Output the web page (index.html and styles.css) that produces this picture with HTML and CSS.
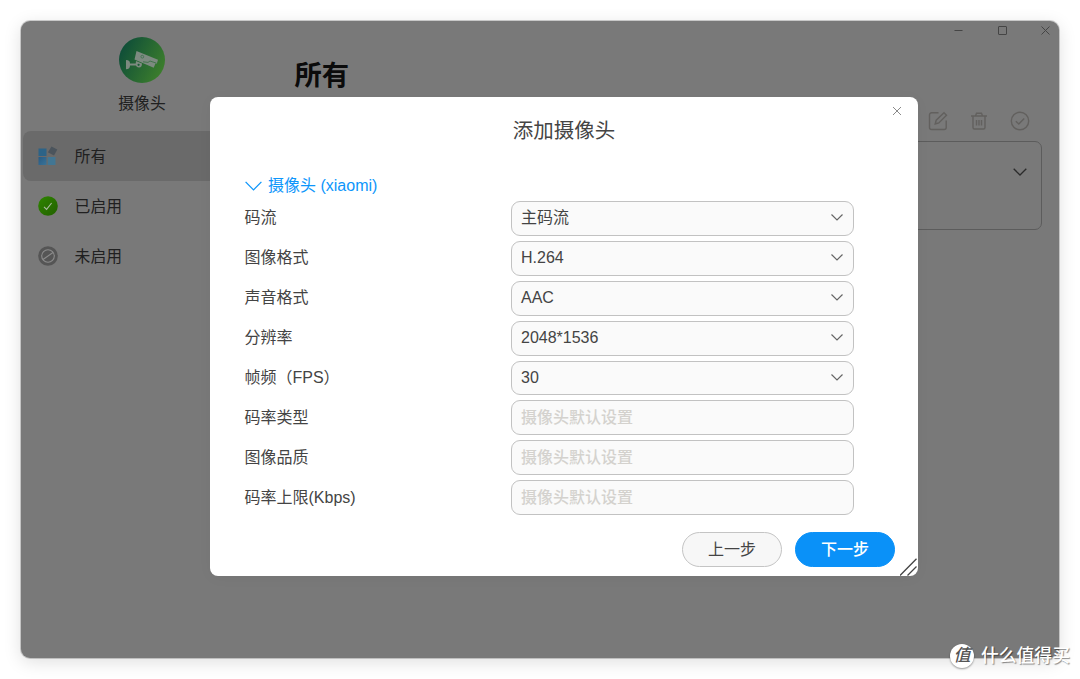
FILE: index.html
```html
<!DOCTYPE html>
<html lang="zh-CN">
<head>
  <meta charset="UTF-8" />
  <meta name="viewport" content="width=device-width, initial-scale=1.0"/>
  <title>添加摄像头</title>
  <link rel="stylesheet" href="styles.css">
</head>
<body>
  <div class="window">
    <aside class="sidebar">
      <div class="app">
        <svg class="app-logo" viewBox="0 0 46 46">
          <defs>
            <linearGradient id="logo-bg" x1="0" y1="0.2" x2="1" y2="0.7">
              <stop offset="0" stop-color="#0c4b39"/>
              <stop offset="1" stop-color="#3d7f2c"/>
            </linearGradient>
          </defs>
          <circle cx="23" cy="23" r="23" fill="url(#logo-bg)"/>
          <g fill="#7d8a80">
            <path d="M17.500 14l21.500 8.800-1.200 4-1.300-.3-1.800 4.300L15.500 22.500z"/>
            <path d="M7 23c3 0 4 1.500 4 3.500h6.500v2H11c0 2-1 3.800-4 3.800z"/>
            <path d="M17 24l6 2.500c0 2.500-1 4-3 4s-3.300-1.500-3.300-3.200z"/>
          </g>
          <circle cx="19.600" cy="27.800" r="1.100" fill="#1a5c36"/>
          <circle cx="23.300" cy="19.700" r="1.400" fill="none" stroke="#2a6840" stroke-width=".6"/>
          <path d="M24 24.800l5 .6 2-1.400 6.500 2.200" fill="none" stroke="#2b6c38" stroke-width=".7"/>
        </svg>
        <p class="app-name">摄像头</p>
      </div>
      <nav class="nav">
        <div class="nav-item active">
          <svg class="nav-icon" viewBox="0 0 20 20">
            <defs>
              <linearGradient id="tile" x1="0" y1="0" x2="1" y2="1">
                <stop offset="0" stop-color="#275b85"/>
                <stop offset="1" stop-color="#3a7397"/>
              </linearGradient>
            </defs>
            <path fill="#2c6387" d="M.5 2.500h8v7.500h-8z"/>
            <path fill="url(#tile)" d="M.5 11h8v8h-8z"/>
            <path fill="#427693" d="M9.700 11h7.800v8H9.700z"/>
            <path fill="#4b545c" d="M13.500.4l5.800 3.200-3.300 6L9.900 6.300z"/>
          </svg>
          <span>所有</span>
        </div>
        <div class="nav-item">
          <svg class="nav-icon" viewBox="0 0 20 20">
            <defs>
              <linearGradient id="ok" x1="0" y1="0" x2="1" y2="1">
                <stop offset="0" stop-color="#2f8500"/>
                <stop offset="1" stop-color="#226000"/>
              </linearGradient>
            </defs>
            <circle cx="10" cy="10" r="9.800" fill="url(#ok)"/>
            <path d="M6 10.800l2.600 2.600 5-6.400" fill="none" stroke="#a9b9a0" stroke-width="1.100"/>
          </svg>
          <span>已启用</span>
        </div>
        <div class="nav-item">
          <svg class="nav-icon" viewBox="0 0 20 20">
            <circle cx="10" cy="10" r="9.800" fill="#555"/>
            <g fill="none" stroke="#8c8c8c" stroke-width="1.100">
              <circle cx="10" cy="10" r="6.300"/>
              <path d="M5 13.500l10-7"/>
            </g>
          </svg>
          <span>未启用</span>
        </div>
      </nav>
    </aside>

    <main class="main">
      <div class="titlebar">
        <svg class="control" viewBox="0 0 11 11"><path d="M1.500 5.500h8"/></svg>
        <svg class="control" viewBox="0 0 11 11"><rect x="1.500" y="1.500" width="8" height="8" rx=".5"/></svg>
        <svg class="control" viewBox="0 0 11 11"><path d="M1.500 1.500l8 8M9.500 1.500l-8 8"/></svg>
      </div>
      <h1 class="page-title">所有</h1>
      <div class="toolbar">
        <svg class="tool" viewBox="0 0 20 20">
          <path d="M10.500 1.800H3.500a2 2 0 0 0-2 2v12.700a2 2 0 0 0 2 2h12.700a2 2 0 0 0 2-2V9.500"/>
          <path d="M7.200 13l1-3.800L16 1.700l2.500 2.500-7.700 7.800z"/>
        </svg>
        <svg class="tool" viewBox="0 0 20 20">
          <path d="M2 5h16M6.500 5l1-2.800h5l1 2.800M4 5v11.500a1.500 1.500 0 0 0 1.500 1.500h9a1.500 1.500 0 0 0 1.500-1.500V5M7.500 9v5.500M10 9v5.500M12.500 9v5.500"/>
        </svg>
        <svg class="tool" viewBox="0 0 20 20">
          <circle cx="10" cy="10" r="8.700"/>
          <path d="M5.800 10.200l3 2.900 5.400-5.600"/>
        </svg>
      </div>
      <div class="card">
        <svg class="card-arrow" viewBox="0 0 14 8"><path d="M.7.8L7 7 13.300.8"/></svg>
      </div>
    </main>

    <div class="dialog">
      <svg class="dialog-close" viewBox="0 0 10 10"><path d="M1 1l8 8M9 1l-8 8"/></svg>
      <h2 class="dialog-title">添加摄像头</h2>
      <div class="section">
        <svg class="section-arrow" viewBox="0 0 17 10"><path d="M.6.9l7.900 8L16.400.9"/></svg>
        <span>摄像头 (xiaomi)</span>
      </div>
      <div class="form">
        <div class="row">
          <span class="label">码流</span>
          <div class="field"><span>主码流</span><svg class="arrow" viewBox="0 0 12 7"><path d="M.5.5L6 6 11.500.5"/></svg></div>
        </div>
        <div class="row">
          <span class="label">图像格式</span>
          <div class="field"><span>H.264</span><svg class="arrow" viewBox="0 0 12 7"><path d="M.5.5L6 6 11.500.5"/></svg></div>
        </div>
        <div class="row">
          <span class="label">声音格式</span>
          <div class="field"><span>AAC</span><svg class="arrow" viewBox="0 0 12 7"><path d="M.5.5L6 6 11.500.5"/></svg></div>
        </div>
        <div class="row">
          <span class="label">分辨率</span>
          <div class="field"><span>2048*1536</span><svg class="arrow" viewBox="0 0 12 7"><path d="M.5.5L6 6 11.500.5"/></svg></div>
        </div>
        <div class="row">
          <span class="label">帧频（FPS）</span>
          <div class="field"><span>30</span><svg class="arrow" viewBox="0 0 12 7"><path d="M.5.5L6 6 11.500.5"/></svg></div>
        </div>
        <div class="row">
          <span class="label">码率类型</span>
          <div class="field empty"><span>摄像头默认设置</span></div>
        </div>
        <div class="row">
          <span class="label">图像品质</span>
          <div class="field empty"><span>摄像头默认设置</span></div>
        </div>
        <div class="row">
          <span class="label">码率上限(Kbps)</span>
          <div class="field empty"><span>摄像头默认设置</span></div>
        </div>
      </div>
      <div class="actions">
        <button class="btn">上一步</button>
        <button class="btn btn-primary">下一步</button>
      </div>
      <svg class="grip" viewBox="0 0 18 18"><path d="M0 17.500L16.500.8M7.500 17.500l9-9"/></svg>
    </div>
  </div>

  <div class="watermark">
    <span class="watermark-logo">值</span>
    <span class="watermark-text">什么值得买</span>
  </div>
</body>
</html>
```
FILE: styles.css
```css
* {
  box-sizing: border-box;
}

body {
  margin: 0;
  padding: 21px;
  height: 679px;
  overflow: hidden;
  background: #fff;
  color: #444;
  font-family: "Liberation Sans", "Noto Sans CJK SC", sans-serif;
  font-size: 16px;
  line-height: 24px;
}

svg {
  display: block;
  flex: none;
}

.window {
  position: relative;
  display: flex;
  width: 1038px;
  height: 637px;
  border-radius: 9px;
  background: #797979;
  box-shadow: 0 0 0 1px rgba(0, 0, 0, 0.18), 0 4px 18px rgba(0, 0, 0, 0.13);
}

/* left menu */
.sidebar {
  width: 241px;
  padding: 16px 0 0 2px;
  color: #202020;
}

.app {
  display: flex;
  flex-direction: column;
  align-items: center;
  height: 94px;
  padding-right: 1px;
}

.app-logo {
  width: 46px;
  height: 46px;
}

.app-name {
  margin: 9px 0 0;
  font-size: 15.8px;
}

.nav-item {
  display: flex;
  align-items: center;
  gap: 16.6px;
  height: 50px;
  padding-left: 15px;
  border-radius: 8px;
  font-size: 15.8px;
}

.nav-item span {
  padding-top: 1px;
}

.nav-item.active {
  background: #6a6a6a;
}

.nav-icon {
  width: 20px;
  height: 20px;
}

/* page behind the dialog */
.main {
  flex: 1;
  padding-left: 32.5px;
}

.titlebar {
  display: flex;
  justify-content: flex-end;
  gap: 32.5px;
  padding: 4px 8px 0 0;
}

.control {
  width: 11px;
  height: 11px;
  fill: none;
  stroke: #454545;
}

.page-title {
  margin: 20px 0 0;
  color: #0b0b0b;
  font-size: 27.3px;
  line-height: 40px;
}

.toolbar {
  display: flex;
  justify-content: flex-end;
  gap: 21px;
  margin-top: 15px;
  padding-right: 29.5px;
}

.tool {
  width: 20px;
  height: 20px;
  fill: none;
  stroke: #62605e;
  stroke-width: 1.4;
}

.card {
  display: flex;
  justify-content: flex-end;
  height: 89px;
  margin: 10px 17px 0 0;
  padding: 26px 14px 0;
  border: 1px solid #5c5c5c;
  border-radius: 7px;
}

.card-arrow {
  width: 14px;
  height: 8px;
  fill: none;
  stroke: #2b2b2b;
  stroke-width: 1.3;
}

/* dialog */
.dialog {
  position: absolute;
  top: 76px;
  left: 189px;
  width: 708px;
  height: 479px;
  padding: 19px 23px 0 35px;
  border-radius: 8px;
  background: #fff;
  box-shadow: 0 2px 14px rgba(0, 0, 0, 0.04);
}

.dialog-close {
  position: absolute;
  top: 9px;
  right: 16px;
  width: 10px;
  height: 10px;
  fill: none;
  stroke: #8a8a8a;
}

.dialog-title {
  margin: 0 12px 0 0;
  font-size: 20.5px;
  font-weight: normal;
  line-height: 30px;
  text-align: center;
}

.section {
  display: flex;
  align-items: center;
  gap: 6px;
  margin-top: 28px;
  color: #0d96fb;
}

.section-arrow {
  width: 17px;
  height: 10px;
  fill: none;
  stroke: #0d96fb;
  stroke-width: 1.3;
}

.form {
  display: flex;
  flex-direction: column;
  gap: 5px;
  margin: 3px 0 0 -0.5px;
}

.row {
  display: flex;
  align-items: center;
  height: 34.9px;
}

.label {
  width: 266.5px;
}

.field {
  display: flex;
  align-items: center;
  justify-content: space-between;
  width: 343px;
  height: 100%;
  padding: 0 10px 1px 9px;
  border: 1px solid #c2c2c2;
  border-radius: 9px;
  background: #fafafa;
}

.field.empty {
  padding-bottom: 3px;
  color: #d4d2ce;
  font-family: "Noto Sans CJK SC", sans-serif;
  font-weight: 500;
}

.arrow {
  width: 12px;
  height: 7px;
  fill: none;
  stroke: #666;
  stroke-width: 1.2;
}

.actions {
  display: flex;
  justify-content: flex-end;
  gap: 13px;
  margin-top: 17px;
}

.btn {
  width: 100px;
  height: 35px;
  padding: 1px 0 0;
  border: 1px solid #c4c4c4;
  border-radius: 18px;
  background: #f7f7f7;
  color: #444;
  font: inherit;
}

.btn-primary {
  border-color: #0a91f8;
  background: #0a91f8;
  color: #fff;
  font-weight: 500;
}

.grip {
  position: absolute;
  right: 0;
  bottom: 0;
  width: 18px;
  height: 18px;
  fill: none;
  stroke: #444;
  stroke-width: 1.3;
}

.watermark {
  position: absolute;
  left: 950px;
  top: 644px;
  display: flex;
  align-items: center;
  gap: 7px;
  color: #fff;
  font-size: 17.8px;
  text-shadow: 1px 1px 1px rgba(0, 0, 0, 0.45);
  white-space: nowrap;
}

.watermark-text {
  font-weight: 500;
}

.watermark-logo {
  width: 24px;
  height: 24px;
  border-radius: 50%;
  background: #fff;
  box-shadow: 0 1px 2px rgba(0, 0, 0, 0.4);
  color: #555;
  font-size: 17px;
  font-style: italic;
  font-weight: 500;
  line-height: 23px;
  text-align: center;
  text-shadow: none;
}
```
